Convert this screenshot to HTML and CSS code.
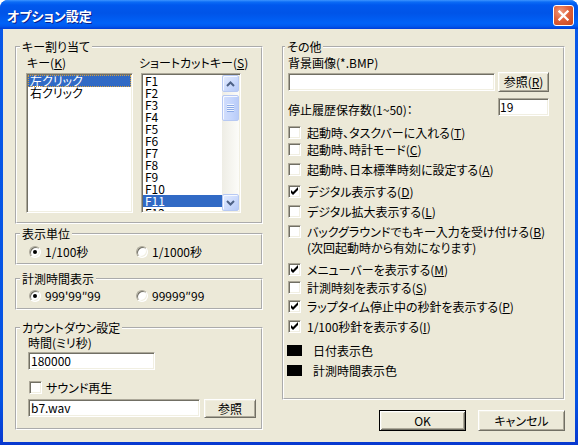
FILE: index.html
```html
<!DOCTYPE html>
<html lang="ja">
<head>
<meta charset="utf-8">
<title>オプション設定</title>
<link rel="stylesheet" href="styles.css">
</head>
<body>
<div class="window">
  <div class="titlebar">
    <span class="title">オプション設定</span>
    <span class="close">
      <svg width="11" height="11" viewBox="0 0 11 11"><path d="M1.5 1.5 L9.5 9.5 M9.5 1.5 L1.5 9.5" stroke="#fff" stroke-width="2.3" stroke-linecap="square"/></svg>
    </span>
  </div>
  <div class="client">
    <div class="col col-left">
      <fieldset class="group g-keys">
        <legend>キー割り当て</legend>
        <div class="keys">
          <div class="keycol">
            <div class="lbl">キー(<u>K</u>)</div>
            <div class="listbox list-key">
              <div class="item sel focus">左クリック</div>
              <div class="item">右クリック</div>
            </div>
          </div>
          <div class="keycol keycol-sc">
            <div class="lbl">ショートカットキー(<u>S</u>)</div>
            <div class="listbox list-sc">
              <div class="items">
                <div class="item">F1</div>
                <div class="item">F2</div>
                <div class="item">F3</div>
                <div class="item">F4</div>
                <div class="item">F5</div>
                <div class="item">F6</div>
                <div class="item">F7</div>
                <div class="item">F8</div>
                <div class="item">F9</div>
                <div class="item">F10</div>
                <div class="item sel">F11</div>
                <div class="item">F12</div>
              </div>
              <div class="scrollbar">
                <div class="sb-btn"><svg width="9" height="6" viewBox="0 0 9 6"><path d="M1 5 L4.5 1.5 L8 5" fill="none" stroke="#4D6185" stroke-width="2"/></svg></div>
                <div class="sb-track"><div class="sb-thumb"><span class="grip"></span></div></div>
                <div class="sb-btn"><svg width="9" height="6" viewBox="0 0 9 6"><path d="M1 1 L4.5 4.5 L8 1" fill="none" stroke="#4D6185" stroke-width="2"/></svg></div>
              </div>
            </div>
          </div>
        </div>
      </fieldset>

      <fieldset class="group g-unit">
        <legend>表示単位</legend>
        <div class="radios">
          <div class="radio-item"><span class="radio on"></span>1/100秒</div>
          <div class="radio-item"><span class="radio"></span>1/1000秒</div>
        </div>
      </fieldset>

      <fieldset class="group g-fmt">
        <legend>計測時間表示</legend>
        <div class="radios">
          <div class="radio-item"><span class="radio on"></span>999'99″99</div>
          <div class="radio-item"><span class="radio"></span>99999″99</div>
        </div>
      </fieldset>

      <fieldset class="group g-cd">
        <legend>カウントダウン設定</legend>
        <div class="cd-body">
          <div class="lbl">時間(ミリ秒)</div>
          <div class="textbox tb-time">180000</div>
          <div class="check-row cd-check"><span class="check"></span><span>サウンド再生</span></div>
          <div class="cd-file">
            <div class="textbox tb-file">b7.wav</div>
            <div class="btn btn-ref">参照</div>
          </div>
        </div>
      </fieldset>
    </div>

    <div class="col col-right">
      <fieldset class="group g-other">
        <legend>その他</legend>
        <div class="other-body">
          <div class="lbl">背景画像(*.BMP)</div>
          <div class="bg-row">
            <div class="textbox tb-bg"></div>
            <div class="btn btn-ref2">参照(<u>R</u>)</div>
          </div>
          <div class="hist-row">
            <span class="lbl">停止履歴保存数(1~50)：</span>
            <div class="textbox tb-hist">19</div>
          </div>
          <div class="checks">
            <div class="check-row r-t"><span class="check"></span><span>起動時、タスクバーに入れる(<u>T</u>)</span></div>
            <div class="check-row r-c"><span class="check"></span><span>起動時、時計モード(<u>C</u>)</span></div>
            <div class="check-row r-a"><span class="check"></span><span>起動時、日本標準時刻に設定する(<u>A</u>)</span></div>
            <div class="check-row r-d"><span class="check"><svg width="11" height="11" viewBox="0 0 11 11"><polygon points="2,4 2,7 4,9 9,4 9,1 4,6" fill="#000"/></svg></span><span>デジタル表示する(<u>D</u>)</span></div>
            <div class="check-row r-l"><span class="check"></span><span>デジタル拡大表示する(<u>L</u>)</span></div>
            <div class="check-row r-b"><span class="check"></span><span>バックグラウンドでもキー入力を受け付ける(<u>B</u>)</span></div>
            <div class="note">(次回起動時から有効になります)</div>
            <div class="check-row r-m"><span class="check"><svg width="11" height="11" viewBox="0 0 11 11"><polygon points="2,4 2,7 4,9 9,4 9,1 4,6" fill="#000"/></svg></span><span>メニューバーを表示する(<u>M</u>)</span></div>
            <div class="check-row r-s"><span class="check"></span><span>計測時刻を表示する(<u>S</u>)</span></div>
            <div class="check-row r-p"><span class="check"><svg width="11" height="11" viewBox="0 0 11 11"><polygon points="2,4 2,7 4,9 9,4 9,1 4,6" fill="#000"/></svg></span><span>ラップタイム停止中の秒針を表示する(<u>P</u>)</span></div>
            <div class="check-row r-i"><span class="check"><svg width="11" height="11" viewBox="0 0 11 11"><polygon points="2,4 2,7 4,9 9,4 9,1 4,6" fill="#000"/></svg></span><span>1/100秒針を表示する(<u>I</u>)</span></div>
            <div class="color-row c1"><span class="swatch"></span><span>日付表示色</span></div>
            <div class="color-row c2"><span class="swatch"></span><span>計測時間表示色</span></div>
          </div>
        </div>
      </fieldset>
      <div class="buttons">
        <div class="btn btn-default">OK</div>
        <div class="btn btn-cancel">キャンセル</div>
      </div>
    </div>
  </div>
</div>
</body>
</html>
```

FILE: styles.css
```css
* { box-sizing: border-box; }
html, body { margin: 0; padding: 0; }
body {
  width: 578px;
  height: 445px;
  overflow: hidden;
  background: #fff;
  font-family: "Noto Sans CJK JP", sans-serif;
  font-size: 12px;
  line-height: 12px;
  color: #000;
  font-feature-settings: "palt";
}

/* ---------- window frame ---------- */
.window {
  width: 578px;
  height: 445px;
  display: flex;
  flex-direction: column;
  background: linear-gradient(to bottom, #0858E8 0%, #0553E3 90%, #0838CF 100%);
  border-radius: 8px 8px 0 0;
  overflow: hidden;
}
.titlebar {
  height: 29px;
  flex: none;
  display: flex;
  align-items: center;
  padding: 2px 4px 0 7px;
  background: linear-gradient(180deg, #3D95FF 0px, #0B6CF6 2px, #0058EE 5px, #0054E8 45%, #0062F8 80%, #0059EF 90%, #003DD7 100%);
}
.title {
  color: #fff;
  font-weight: bold;
  font-size: 13px;
  line-height: 14px;
  text-shadow: 1px 1px 0 #0A1F8A;
}
.close {
  margin-left: auto;
  width: 21px;
  height: 21px;
  border: 1px solid #fff;
  border-radius: 3px;
  background: radial-gradient(circle at 35% 30%, #EF9A7C 0%, #E0623C 45%, #C8461C 100%);
  display: flex;
  align-items: center;
  justify-content: center;
}
.client {
  flex: 1;
  margin: 0 3px 3px;
  background: #ECE9D8;
  display: grid;
  grid-template-columns: 248px 283px;
  column-gap: 19px;
  align-items: start;
  padding: 12px 0 0 12px;
}
.col { display: flex; flex-direction: column; }

/* ---------- group boxes ---------- */
.group {
  margin: 0;
  padding: 0;
  border: 2px groove #fff;
  min-width: 0;
}
.group legend {
  margin-left: 3px;
  padding: 0 2px;
  height: 12px;
  line-height: 12px;
}
.g-other legend { margin-left: 1px; }

.lbl { line-height: 12px; white-space: nowrap; }
u { text-decoration: underline; text-underline-offset: 1px; }

/* key assignment */
.g-keys { padding: 4px 0 9px 0; }
.keys { display: flex; padding-left: 9px; }
.keycol { display: flex; flex-direction: column; gap: 4px; }
.keycol .lbl { padding-left: 1px; }
.keycol-sc { margin-left: 5px; }
.keycol-sc .listbox { margin-left: 3px; }

.listbox {
  background: #fff;
  border: 1px solid;
  border-color: #ACA899 #fff #fff #ACA899;
  box-shadow: inset 1px 1px 0 #716F64, inset -1px -1px 0 #F1EFE2;
  padding: 1px;
  height: 140px;
  overflow: hidden;
}
.list-key { width: 107px; }
.list-sc { width: 100px; display: flex; }
.items { flex: 1; overflow: hidden; }
.item {
  height: 12px;
  line-height: 12px;
  padding-left: 2px;
  white-space: nowrap;
}
.item.sel { background: #316AC5; color: #fff; }
.item.focus { outline: 1px dotted #D4A040; outline-offset: -1px; }

.scrollbar {
  width: 17px;
  flex: none;
  display: flex;
  flex-direction: column;
  background: linear-gradient(to right, #EEEDE5, #FCFCF9);
}
.sb-btn {
  height: 17px;
  flex: none;
  border: 1px solid #B7C9F3;
  border-radius: 2px;
  background: linear-gradient(135deg, #E4ECFE 0%, #CBDAFC 55%, #B6CAF7 100%);
  box-shadow: inset 1px 1px 0 #F6F9FF;
  display: flex;
  align-items: center;
  justify-content: center;
}
.sb-track { flex: 1; padding-top: 3px; }
.sb-thumb {
  height: 26px;
  border: 1px solid #B7C9F3;
  border-radius: 2px;
  background: linear-gradient(to right, #D2DEFC 0%, #C4D5FC 60%, #B9CCF8 100%);
  box-shadow: inset 1px 1px 0 #F6F9FF;
  display: flex;
  align-items: center;
  justify-content: center;
}
.grip {
  width: 7px;
  height: 8px;
  background: repeating-linear-gradient(to bottom, #EEF4FE 0 1px, #8CAAE6 1px 2px);
}

/* radios */
.g-unit { margin-top: 4px; padding: 5px 0 5px; }
.g-fmt { margin-top: 8px; padding: 4px 0 6px; }
.radios { display: flex; padding-left: 12px; }
.radio-item {
  width: 107px;
  height: 13px;
  display: flex;
  align-items: center;
  white-space: nowrap;
}
.radio {
  width: 12px;
  height: 12px;
  flex: none;
  margin-right: 4px;
  border-radius: 50%;
  background: #fff;
  border: 1px solid;
  border-color: #ACA899 #fff #fff #ACA899;
  box-shadow: inset 1px 1px 0 #716F64, inset -1px -1px 0 #F1EFE2;
  display: flex;
  align-items: center;
  justify-content: center;
}
.radio.on::after {
  content: "";
  width: 4px;
  height: 4px;
  border-radius: 50%;
  background: #000;
}

/* countdown */
.g-cd { margin-top: 12px; padding: 3px 0 10px; }
.cd-body { padding-left: 11px; display: flex; flex-direction: column; align-items: flex-start; }
.textbox {
  height: 18px;
  background: #fff;
  border: 1px solid;
  border-color: #ACA899 #fff #fff #ACA899;
  box-shadow: inset 1px 1px 0 #716F64, inset -1px -1px 0 #F1EFE2;
  padding: 2px 0 0 2px;
  line-height: 12px;
  white-space: nowrap;
}
.tb-time { width: 127px; margin-top: 3px; }
.cd-check { margin-top: 11px; padding-left: 1px; }
.cd-check .check { margin-right: 4px; }
.cd-file { margin-top: 5px; display: flex; gap: 4px; height: 19px; }
.tb-file { width: 172px; }
.btn {
  display: flex;
  align-items: center;
  justify-content: center;
  background: #ECE9D8;
  border: 1px solid;
  border-color: #fff #716F64 #716F64 #fff;
  box-shadow: inset 1px 1px 0 #F1EFE2, inset -1px -1px 0 #ACA899;
  white-space: nowrap;
  line-height: 12px;
}
.btn-ref { width: 52px; height: 19px; }

/* check boxes */
.check-row {
  height: 13px;
  display: flex;
  align-items: center;
  white-space: nowrap;
}
.check {
  width: 13px;
  height: 13px;
  flex: none;
  margin-right: 6px;
  background: #fff;
  border: 1px solid;
  border-color: #ACA899 #fff #fff #ACA899;
  box-shadow: inset 1px 1px 0 #716F64, inset -1px -1px 0 #F1EFE2;
  display: flex;
}

/* other group */
.g-other { padding: 4px 0 21px; }
.other-body { padding-left: 4px; display: flex; flex-direction: column; }
.bg-row { margin-top: 3px; display: flex; align-items: center; gap: 3px; height: 20px; }
.tb-bg { width: 207px; }
.btn-ref2 { width: 51px; height: 20px; }
.hist-row { margin-top: 6px; height: 18px; display: flex; align-items: flex-end; width: 261px; }
.tb-hist { width: 51px; margin-left: auto; padding-left: 1px; }

.checks { display: flex; flex-direction: column; }
.r-t { margin-top: 10px; }
.r-c { margin-top: 4px; }
.r-a { margin-top: 7px; }
.r-d { margin-top: 9px; }
.r-l { margin-top: 7px; }
.r-b { margin-top: 7px; }
.note { margin-top: 4px; height: 12px; padding-left: 19px; white-space: nowrap; }
.r-m { margin-top: 9px; }
.r-s { margin-top: 5px; }
.r-p { margin-top: 6px; }
.r-i { margin-top: 7px; }
.color-row { height: 13px; display: flex; align-items: center; white-space: nowrap; }
.c1 { margin-top: 11px; }
.c2 { margin-top: 7px; }
.swatch {
  width: 15px;
  height: 11px;
  margin-left: -1px;
  margin-right: 11px;
  background: #000;
}

/* dialog buttons */
.buttons {
  margin-top: 10px;
  display: flex;
  justify-content: flex-end;
  gap: 12px;
}
.btn-default, .btn-cancel { width: 87px; height: 21px; }
.btn-default {
  border: 1px solid #000;
  box-shadow: inset 1px 1px 0 #fff, inset -1px -1px 0 #716F64, inset 2px 2px 0 #F1EFE2, inset -2px -2px 0 #ACA899;
}
```
